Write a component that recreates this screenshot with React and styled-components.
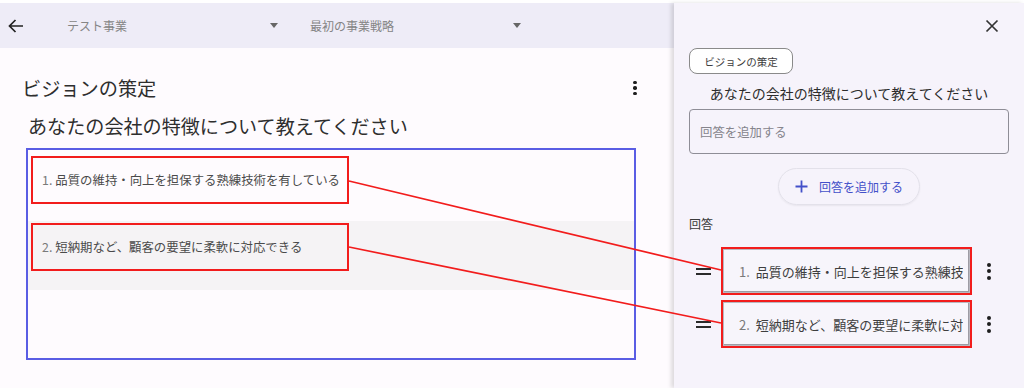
import React from "react";
import styled, { createGlobalStyle } from "styled-components";

const GlobalStyle = createGlobalStyle`
  html, body {
    margin: 0;
    padding: 0;
    background: #ffffff;
  }
  body {
    font-family: "Noto Sans CJK JP", "Noto Sans", sans-serif;
    color: #333;
  }
`;

const answers = [
  "品質の維持・向上を担保する熟練技術を有している",
  "短納期など、顧客の要望に柔軟に対応できる",
];

function BackArrow() {
  return (
    <svg width="16" height="16" viewBox="0 0 16 16" fill="none">
      <path d="M15 8H1.5M7.5 2L1.5 8l6 6" stroke="#222" strokeWidth="1.7" />
    </svg>
  );
}

function CloseIcon() {
  return (
    <svg width="14" height="14" viewBox="0 0 14 14" fill="none">
      <path d="M1.5 1.5l11 11M12.5 1.5l-11 11" stroke="#333" strokeWidth="1.7" />
    </svg>
  );
}

function PlusIcon() {
  return (
    <svg width="13" height="13" viewBox="0 0 13 13" fill="none">
      <path d="M6.5 0.5v12M0.5 6.5h12" stroke="#4350c9" strokeWidth="1.8" />
    </svg>
  );
}

function App() {
  return (
    <>
      <GlobalStyle />
      <Page>
        <Main>
          <TopBar>
            <BackButton>
              <BackArrow />
            </BackButton>
            <Select>
              <span>テスト事業</span>
              <Caret />
            </Select>
            <Select>
              <span>最初の事業戦略</span>
              <Caret />
            </Select>
          </TopBar>

          <Header>
            <Title>ビジョンの策定</Title>
            <Kebab>
              <i />
              <i />
              <i />
            </Kebab>
          </Header>
          <Question>あなたの会社の特徴について教えてください</Question>

          <List>
            {answers.map((text, i) => (
              <Row key={text} $shaded={i === 1} $top={i === 0 ? 6 : 2}>
                <RowMark>
                  <Num>{i + 1}.</Num>
                  {text}
                </RowMark>
              </Row>
            ))}
          </List>
        </Main>

        <Side>
          <CloseRow>
            <CloseIcon />
          </CloseRow>
          <Chip>ビジョンの策定</Chip>
          <SideQuestion>あなたの会社の特徴について教えてください</SideQuestion>
          <Input>回答を追加する</Input>
          <AddButton>
            <PlusIcon />
            回答を追加する
          </AddButton>
          <Label>回答</Label>
          <Items>
            {answers.map((text, i) => (
              <Item key={text}>
                <Handle>
                  <i />
                  <i />
                </Handle>
                <ItemMark>
                  <ItemBox>
                    <ItemText>
                      <ItemNum>{i + 1}.</ItemNum>
                      {text}
                    </ItemText>
                  </ItemBox>
                </ItemMark>
                <Kebab $small>
                  <i />
                  <i />
                  <i />
                </Kebab>
              </Item>
            ))}
          </Items>
        </Side>

        <Lines width="1024" height="388" viewBox="0 0 1024 388">
          <line x1="349" y1="181" x2="721" y2="270" />
          <line x1="349" y1="247" x2="721" y2="323" />
        </Lines>
      </Page>
    </>
  );
}

export default App;

const Page = styled.div`
  position: relative;
  display: flex;
  width: 1024px;
  height: 388px;
  padding-top: 3px;
  box-sizing: border-box;
  overflow: hidden;
  background: #ffffff;
`;

const Main = styled.div`
  width: 674px;
  flex-shrink: 0;
  background: #fefbfe;
  display: flex;
  flex-direction: column;
`;

const TopBar = styled.div`
  height: 45px;
  background: #eeecf7;
  display: flex;
  align-items: center;
  padding-left: 8px;
`;

const BackButton = styled.div`
  width: 16px;
  height: 16px;
  display: flex;
  margin-right: 43px;
`;

const Select = styled.div`
  width: 222px;
  padding-right: 11px;
  box-sizing: border-box;
  margin-right: 21px;
  display: flex;
  align-items: center;
  justify-content: space-between;
  font-size: 12px;
  color: #858585;
`;

const Caret = styled.span`
  width: 0;
  height: 0;
  border-left: 4px solid transparent;
  border-right: 4px solid transparent;
  border-top: 5px solid #666;
`;

const Header = styled.div`
  margin-top: 28px;
  height: 24px;
  padding: 0 36px 0 22px;
  display: flex;
  align-items: center;
  justify-content: space-between;
`;

const Title = styled.div`
  font-size: 19.2px;
  line-height: 24px;
  color: #2e2e2e;
`;

const Kebab = styled.div`
  display: flex;
  flex-direction: column;
  align-items: center;
  gap: ${(p) => (p.$small ? "2.5px" : "2px")};
  width: 6px;

  i {
    display: block;
    width: ${(p) => (p.$small ? "4px" : "3.5px")};
    height: ${(p) => (p.$small ? "4px" : "3.5px")};
    border-radius: 50%;
    background: #1e1e1e;
  }
`;

const Question = styled.div`
  margin-top: 14px;
  padding-left: 28px;
  font-size: 19.1px;
  line-height: 24px;
  color: #2e2e2e;
`;

const List = styled.div`
  margin: 10px 0 0 26px;
  width: 610px;
  height: 212px;
  box-sizing: border-box;
  border: 2px solid #5a5de4;
  display: flex;
  flex-direction: column;
`;

const Row = styled.div`
  height: ${(p) => (p.$shaded ? "69px" : "71px")};
  box-sizing: border-box;
  padding: ${(p) => p.$top}px 0 0 3px;
  background: ${(p) => (p.$shaded ? "#f5f3f5" : "transparent")};
`;

const RowMark = styled.div`
  width: 318px;
  height: 48px;
  box-sizing: border-box;
  border: 2px solid #f21c1c;
  display: flex;
  align-items: center;
  padding-left: 9px;
  font-size: 12.4px;
  color: #4a4a4a;
  white-space: nowrap;
`;

const Num = styled.span`
  color: #7a7a7a;
  margin-right: 3px;
`;

const Side = styled.div`
  flex: 1;
  position: relative;
  background: #f6f3fb;
  box-shadow: -3px 0 4px rgba(0, 0, 0, 0.13);
  padding: 0 15px;
  display: flex;
  flex-direction: column;
`;

const CloseRow = styled.div`
  height: 45px;
  display: flex;
  align-items: center;
  justify-content: flex-end;
  padding-right: 10px;
`;

const Chip = styled.div`
  align-self: flex-start;
  width: 104px;
  height: 26px;
  box-sizing: border-box;
  border: 1px solid #8a8a8a;
  border-radius: 8px;
  background: #ffffff;
  display: flex;
  align-items: center;
  justify-content: center;
  font-size: 10.5px;
  color: #3c3c3c;
`;

const SideQuestion = styled.div`
  margin-top: 9px;
  text-align: center;
  font-size: 14px;
  line-height: 20px;
  color: #2c2c2c;
`;

const Input = styled.div`
  margin-top: 6px;
  height: 45px;
  box-sizing: border-box;
  border: 1px solid #8e8d96;
  border-radius: 4px;
  display: flex;
  align-items: center;
  padding-left: 10px;
  font-size: 12.4px;
  color: #85848c;
`;

const AddButton = styled.div`
  align-self: center;
  margin-top: 14px;
  width: 142px;
  height: 37px;
  box-sizing: border-box;
  border: 1px solid #e3e1ea;
  border-radius: 19px;
  box-shadow: 0 1px 2px rgba(0, 0, 0, 0.06);
  display: flex;
  align-items: center;
  justify-content: center;
  gap: 11px;
  font-size: 12px;
  color: #4350c9;
`;

const Label = styled.div`
  margin-top: 10px;
  font-size: 12px;
  line-height: 18px;
  color: #3a3a3a;
`;

const Items = styled.div`
  margin-top: 14px;
  display: flex;
  flex-direction: column;
  gap: 5px;
`;

const Item = styled.div`
  display: flex;
  align-items: center;
`;

const Handle = styled.div`
  margin-left: 7px;
  width: 15px;
  display: flex;
  flex-direction: column;
  gap: 3px;
  margin-right: 10px;

  i {
    display: block;
    height: 2px;
    background: #2a2a2a;
  }
`;

const ItemMark = styled.div`
  width: 251px;
  height: 48px;
  box-sizing: border-box;
  border: 2px solid #f21c1c;
  margin-right: 14px;
`;

const ItemBox = styled.div`
  height: 100%;
  box-sizing: border-box;
  border: 1px solid #b9b8c0;
  box-shadow: inset -1px -1px 0 #9d9ca4;
  background: #f7f5fb;
  display: flex;
  align-items: center;
  padding: 0 6px 0 15px;
`;

const ItemText = styled.div`
  flex: 1;
  min-width: 0;
  overflow: hidden;
  white-space: nowrap;
  font-size: 13px;
  color: #3e3e3e;
`;

const ItemNum = styled.span`
  color: #7a7a7a;
  margin-right: 6px;
`;

const Lines = styled.svg`
  position: absolute;
  left: 0;
  top: 0;
  pointer-events: none;

  line {
    stroke: #f21c1c;
    stroke-width: 1.7;
  }
`;
